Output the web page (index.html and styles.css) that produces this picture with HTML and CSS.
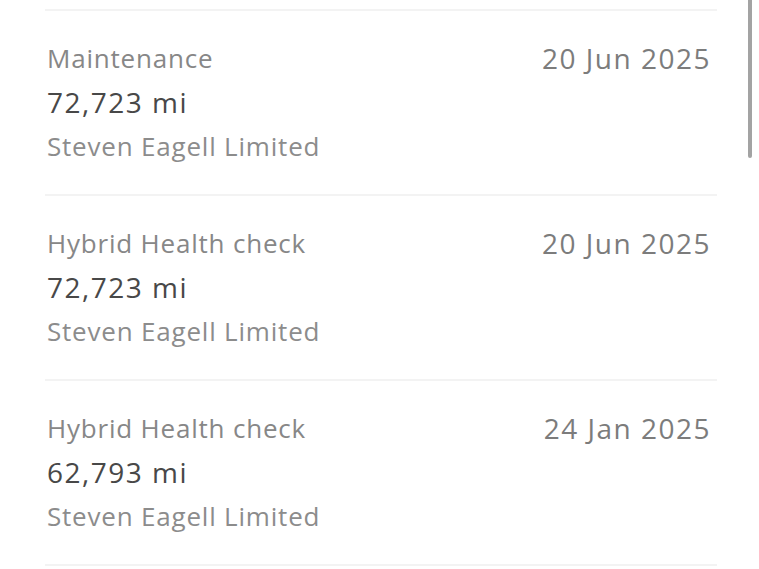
FILE: index.html
```html
<!DOCTYPE html>
<html lang="en">
<head>
  <meta charset="UTF-8" />
  <title>Service History</title>
  <link rel="stylesheet" href="styles.css">
</head>
<body>

<div class="history">
  <div class="record">
    <div class="record-details">
      <div class="type">Maintenance</div>
      <div class="mileage">72,723 mi</div>
      <div class="dealer">Steven Eagell Limited</div>
    </div>
    <div class="date">20 Jun 2025</div>
  </div>

  <div class="record">
    <div class="record-details">
      <div class="type">Hybrid Health check</div>
      <div class="mileage">72,723 mi</div>
      <div class="dealer">Steven Eagell Limited</div>
    </div>
    <div class="date">20 Jun 2025</div>
  </div>

  <div class="record">
    <div class="record-details">
      <div class="type">Hybrid Health check</div>
      <div class="mileage">62,793 mi</div>
      <div class="dealer">Steven Eagell Limited</div>
    </div>
    <div class="date">24 Jan 2025</div>
  </div>
</div>

<div class="scrollbar"></div>

</body>
</html>
```

FILE: styles.css
```css
body {
  font-family: 'Open Sans', 'Liberation Sans', sans-serif;
  background-color: #ffffff;
  margin: 0;
  padding: 0;
  overflow: hidden;
}

.history {
  margin: 9px 42px 0 45px;
  border-bottom: 2px solid #f3f3f3;
}

.record {
  display: flex;
  justify-content: space-between;
  align-items: flex-start;
  border-top: 2px solid #f3f3f3;
  padding: 25px 6px 26px 2px;
}

.type {
  font-size: 26px;
  line-height: 44px;
  letter-spacing: 0.8px;
  color: #878787;
}

.mileage {
  font-size: 28px;
  line-height: 44px;
  letter-spacing: 1.5px;
  color: #484848;
}

.dealer {
  font-size: 26px;
  line-height: 44px;
  letter-spacing: 0.8px;
  color: #8c8c8c;
}

.date {
  font-size: 28px;
  line-height: 44px;
  letter-spacing: 1.5px;
  color: #7c7c7c;
}

.scrollbar {
  position: absolute;
  top: 0;
  right: 7px;
  width: 4px;
  height: 158px;
  border-radius: 0 0 2px 2px;
  background-color: #a3a3a3;
}
```
